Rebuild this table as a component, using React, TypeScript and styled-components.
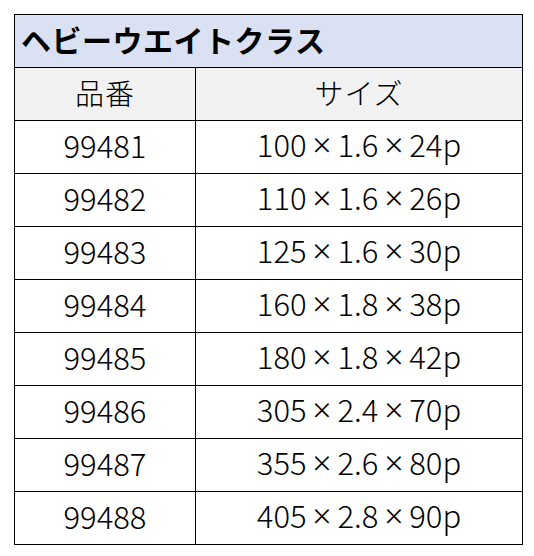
import * as React from "react";
import styled, { createGlobalStyle } from "styled-components";

const GlobalStyle = createGlobalStyle`
  html, body {
    margin: 0;
    padding: 0;
    background: #ffffff;
  }
`;

const Page = styled.div`
  padding: 14px 0 0 14px;
  font-family: "Noto Sans CJK JP", "Noto Sans", sans-serif;
  color: #000000;
`;

const Table = styled.table`
  border-collapse: collapse;
  width: 508px;
  table-layout: fixed;
`;

const Col = styled.col<{ $w: number }>`
  width: ${(p) => p.$w}px;
`;

const TitleCell = styled.th`
  height: 53px;
  padding: 0 0 4px 6px;
  box-sizing: border-box;
  background: #d9e1f2;
  border: 1px solid #000000;
  text-align: left;
  font-size: 30px;
  font-weight: 700;
  letter-spacing: 0.5px;
  line-height: 1;
`;

const HeadCell = styled.th`
  height: 53px;
  padding: 0 0 4px;
  box-sizing: border-box;
  background: #f2f2f2;
  border: 1px solid #000000;
  text-align: center;
  font-size: 29px;
  font-weight: 300;
  letter-spacing: 1px;
  line-height: 1;
`;

const Cell = styled.td`
  height: 53px;
  padding: 0 0 5px;
  box-sizing: border-box;
  border: 1px solid #000000;
  text-align: center;
  font-size: 31px;
  font-weight: 300;
  line-height: 1;
`;

const Times = styled.span`
  display: inline-block;
  font-family: "Noto Sans", sans-serif;
  font-size: 33px;
  font-weight: 300;
  margin: 0 6px;
`;

const rows = [
  ["99481", "100", "1.6", "24p"],
  ["99482", "110", "1.6", "26p"],
  ["99483", "125", "1.6", "30p"],
  ["99484", "160", "1.8", "38p"],
  ["99485", "180", "1.8", "42p"],
  ["99486", "305", "2.4", "70p"],
  ["99487", "355", "2.6", "80p"],
  ["99488", "405", "2.8", "90p"],
];

const App = (): React.ReactElement => {
  return (
    <Page>
      <GlobalStyle />
      <Table>
        <colgroup>
          <Col $w={181} />
          <Col $w={327} />
        </colgroup>
        <thead>
          <tr>
            <TitleCell colSpan={2}>ヘビーウエイトクラス</TitleCell>
          </tr>
          <tr>
            <HeadCell>品番</HeadCell>
            <HeadCell>サイズ</HeadCell>
          </tr>
        </thead>
        <tbody>
          {rows.map(([code, a, b, c]) => (
            <tr key={code}>
              <Cell>{code}</Cell>
              <Cell>
                {a}
                <Times>×</Times>
                {b}
                <Times>×</Times>
                {c}
              </Cell>
            </tr>
          ))}
        </tbody>
      </Table>
    </Page>
  );
};

export default App;
